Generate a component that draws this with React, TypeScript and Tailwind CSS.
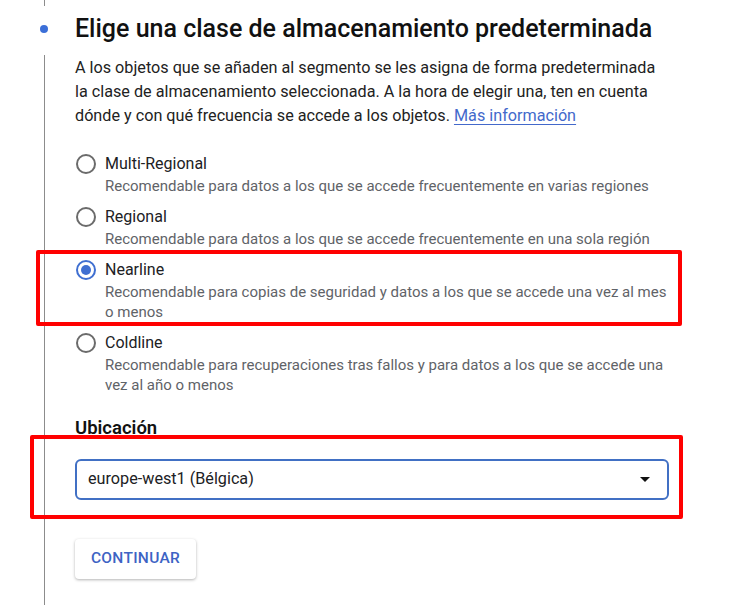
import React from 'react';

type Option = {
  id: string;
  label: string;
  description: string;
};

const options: Option[] = [
  {
    id: 'multi',
    label: 'Multi-Regional',
    description: 'Recomendable para datos a los que se accede frecuentemente en varias regiones',
  },
  {
    id: 'regional',
    label: 'Regional',
    description: 'Recomendable para datos a los que se accede frecuentemente en una sola región',
  },
  {
    id: 'nearline',
    label: 'Nearline',
    description:
      'Recomendable para copias de seguridad y datos a los que se accede una vez al mes o menos',
  },
  {
    id: 'coldline',
    label: 'Coldline',
    description:
      'Recomendable para recuperaciones tras fallos y para datos a los que se accede una vez al año o menos',
  },
];

function Radio({ checked }: { checked: boolean }) {
  return (
    <div
      className={`w-5 h-5 rounded-full border-2 flex items-center justify-center shrink-0 ${
        checked ? 'border-[#3f6fd1]' : 'border-[#6b6b6b]'
      }`}
    >
      {checked && <div className="w-2.5 h-2.5 rounded-full bg-[#3f6fd1]" />}
    </div>
  );
}

export default function App() {
  const [selected, setSelected] = React.useState('nearline');

  return (
    <div className="relative flex w-[742px] min-h-[605px] bg-white font-['Roboto',sans-serif] text-[#202124]">
      {/* stepper rail */}
      <div className="ml-9 w-4 flex flex-col items-center">
        <div className="w-px h-[6px] bg-[#8c8c8c]" />
        <div className="mt-[19px] w-2 h-2 rounded-full bg-[#3b6fd8]" />
        <div className="mt-[22px] w-px flex-1 bg-[#8c8c8c]" />
      </div>

      <div className="ml-[23px] w-[594px] pt-[13px]">
        <h2 className="text-[25px] leading-8 font-medium text-[#111] whitespace-nowrap">
          Elige una clase de almacenamiento predeterminada
        </h2>
        <p className="mt-[11px] text-[16.2px] leading-6 text-[#222]">
          A los objetos que se añaden al segmento se les asigna de forma predeterminada la clase de
          almacenamiento seleccionada. A la hora de elegir una, ten en cuenta dónde y con qué
          frecuencia se accede a los objetos.{' '}
          <a href="#" className="text-[#4369cb] underline underline-offset-[3px] decoration-1">
            Más información
          </a>
        </p>

        <div className="mt-6 flex flex-col gap-[9px]">
          {options.map((opt) => (
            <label
              key={opt.id}
              className="flex gap-[9px] cursor-pointer"
              onClick={() => setSelected(opt.id)}
            >
              <div className="h-6 flex items-center ml-px">
                <Radio checked={selected === opt.id} />
              </div>
              <div className="flex flex-col w-[572px] shrink-0">
                <span className="text-[16px] leading-6 text-[#202124]">{opt.label}</span>
                <span className="text-[15px] leading-5 text-[#5f6368]">{opt.description}</span>
              </div>
            </label>
          ))}
        </div>

        <h3 className="mt-[21px] text-[18.5px] leading-6 font-semibold text-[#111]">Ubicación</h3>

        <div className="mt-[19px] h-[41px] rounded-[6px] border-2 border-[#4170c4] flex items-center justify-between pl-[11px] pr-[17px]">
          <span className="text-[16.2px] text-[#202124]">europe-west1 (Bélgica)</span>
          <svg width="10" height="5" viewBox="0 0 10 5">
            <path d="M0 0 L10 0 L5 5 Z" fill="#111" />
          </svg>
        </div>

        <button className="mt-[39px] h-10 w-[121px] rounded bg-white shadow-[0_1px_3px_rgba(0,0,0,0.3)] text-[15.5px] font-medium tracking-[0.3px] text-[#3d63c4]">
          CONTINUAR
        </button>
      </div>

      {/* annotation boxes */}
      <div className="absolute left-[36px] top-[250px] w-[646px] h-[76px] border-4 border-[#ff0000] rounded-[2px] pointer-events-none" />
      <div className="absolute left-[30px] top-[435px] w-[653px] h-[84px] border-4 border-[#ff0000] rounded-[2px] pointer-events-none" />
    </div>
  );
}
